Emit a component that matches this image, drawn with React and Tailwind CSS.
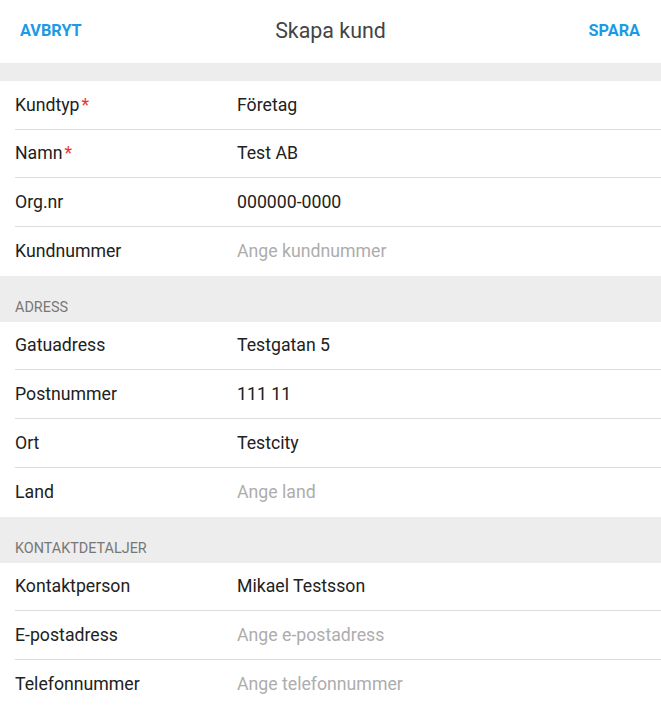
const sections = [
  {
    title: null,
    rows: [
      { label: "Kundtyp", required: true, value: "Företag" },
      { label: "Namn", required: true, value: "Test AB" },
      { label: "Org.nr", value: "000000-0000" },
      { label: "Kundnummer", placeholder: "Ange kundnummer" },
    ],
  },
  {
    title: "ADRESS",
    rows: [
      { label: "Gatuadress", value: "Testgatan 5" },
      { label: "Postnummer", value: "111 11" },
      { label: "Ort", value: "Testcity" },
      { label: "Land", placeholder: "Ange land" },
    ],
  },
  {
    title: "KONTAKTDETALJER",
    rows: [
      { label: "Kontaktperson", value: "Mikael Testsson" },
      { label: "E-postadress", placeholder: "Ange e-postadress" },
      { label: "Telefonnummer", placeholder: "Ange telefonnummer" },
    ],
  },
];

function Row({ row, last }) {
  return (
    <div className="pl-[15px]">
      <div className={`flex h-[48.7px] items-center ${last ? "" : "border-b border-[#dcdcdc]"}`}>
        <div className="w-[222px] text-[17.7px] text-[#212121]">
          {row.label}
          {row.required && <span className="ml-[2px] text-[#e53935]">*</span>}
        </div>
        {row.value ? (
          <span className="text-[17.7px] text-[#212121]">{row.value}</span>
        ) : (
          <span className="text-[17.7px] text-[#adadad]">{row.placeholder}</span>
        )}
      </div>
    </div>
  );
}

export default function App() {
  return (
    <main className="min-h-screen bg-white font-['Roboto',sans-serif]">
      <header className="grid h-[63px] grid-cols-[1fr_auto_1fr] items-center px-[20px]">
        <button type="button" className="justify-self-start text-[16.3px] font-bold text-[#1a9be3]">
          AVBRYT
        </button>
        <h1 className="text-[21.4px] text-[#444]">Skapa kund</h1>
        <button type="button" className="justify-self-end pr-[1px] text-[16.3px] font-bold text-[#1a9be3]">
          SPARA
        </button>
      </header>
      {sections.map((section, i) => (
        <section key={i}>
          {section.title ? (
            <div className="flex h-[46px] items-end bg-[#ededed] pb-[3px] pl-[15px] text-[14.4px] text-[#777]">
              {section.title}
            </div>
          ) : (
            <div className="h-[18px] bg-[#ededed]" />
          )}
          {section.rows.map((row, j) => (
            <Row key={row.label} row={row} last={j === section.rows.length - 1} />
          ))}
        </section>
      ))}
    </main>
  );
}
